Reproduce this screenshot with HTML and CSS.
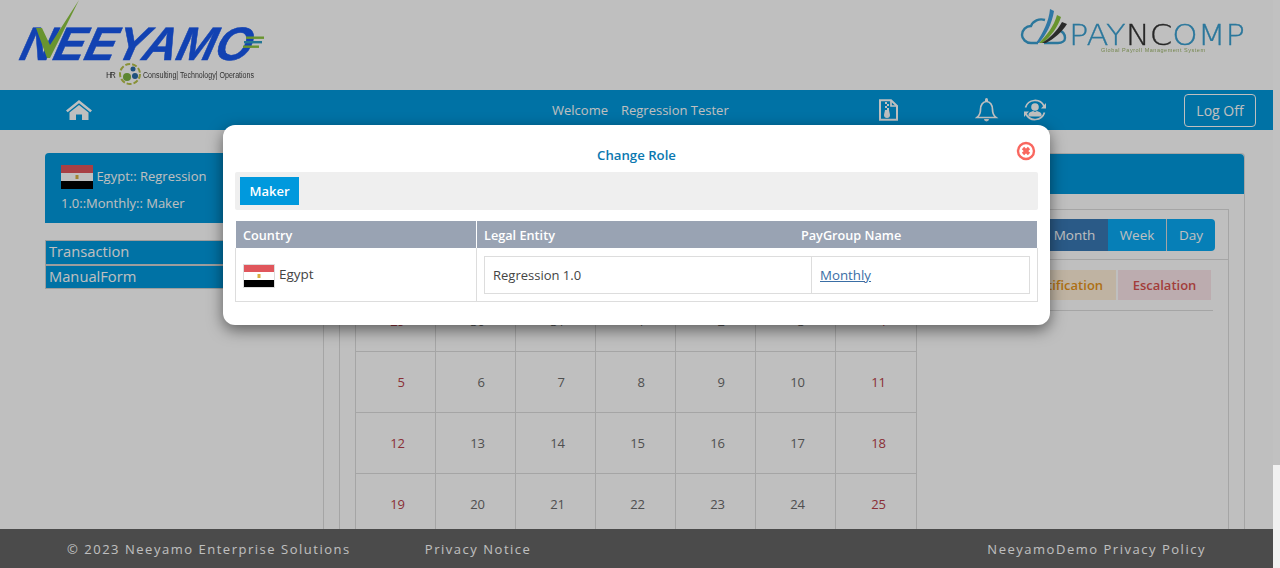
FILE: index.html
```html
<!DOCTYPE html>
<html lang="en">
<head>
<meta charset="utf-8">
<title>Neeyamo PayNComp</title>
<link rel="stylesheet" href="styles.css">
</head>
<body>
<div class="app">
  <div class="page">
    <header class="brand">
      <svg class="logo-neeyamo" width="270" height="90" viewBox="0 0 270 90">
        <text class="ny-word" transform="skewX(-14)" x="33" y="60" textLength="231" lengthAdjust="spacingAndGlyphs">NEEYAMO</text>
        <polygon class="ny-check" points="36,28 42,28 50,45 79,0 50,58 47,58"/>
        <g class="ny-lines">
          <rect x="246" y="36.500" width="18" height="2.400"/>
          <rect x="243" y="45.500" width="16" height="2.400"/>
        </g>
        <g class="ny-lines2">
          <rect x="244" y="41" width="18" height="2.400"/>
        </g>
        <text class="ny-sub" x="106" y="78" textLength="10">HR</text>
        <circle class="ny-globe-a" cx="130" cy="74" r="10"/>
        <circle class="ny-globe-b" cx="127" cy="77" r="4"/>
        <circle class="ny-globe-c" cx="135" cy="76" r="3"/>
        <circle class="ny-globe-d" cx="133" cy="69" r="2.500"/>
        <text class="ny-sub" x="143" y="78" textLength="111" lengthAdjust="spacingAndGlyphs">Consulting| Technology| Operations</text>
      </svg>
      <svg class="logo-paynd" width="240" height="60" viewBox="0 0 240 60">
        <path class="pc-cloud" d="M18 38H11C6 38 2 34 2 30C2 25 6 21 11 21C13 16 19 13 25 15M38 25C42 26 45 29 45 33C45 36 42 38 38 38H24"/>
        <path class="pc-blue" d="M30 4L34 6C32 19 26 30 19 38H16C23 28 29 16 30 4Z"/>
        <path class="pc-green" d="M37 10L41 12C38 22 31 31 23 38H19C27 30 34 21 37 10Z"/>
        <path class="pc-dark" d="M42 17L47 19C42 27 34 34 26 38H22C30 33 37 26 42 17Z"/>
        <text class="pc-word" x="49" y="40" textLength="176" lengthAdjust="spacingAndGlyphs">PAY<tspan class="pc-nc">NC</tspan>OMP</text>
        <text class="pc-sub" x="81" y="47" textLength="104">Global Payroll Management System</text>
      </svg>
    </header>

    <nav class="topbar">
      <svg class="icon-home" width="26" height="20" viewBox="0 0 26 20">
        <path d="M13 0L26 10.500L24.300 12.300L13 3.200L1.700 12.300L0 10.500Z"/>
        <path d="M13 5L22.500 12.600V20H16V14.500H10V20H3.500V12.600Z"/>
      </svg>
      <div class="welcome"><span>Welcome</span><span>Regression Tester</span></div>
      <svg class="icon-zip" width="20" height="22" viewBox="0 0 20 22">
        <path class="ln ln-bold" d="M1 1.200H12L18 7V20.800H1Z"/>
        <path class="ln" d="M12 1.200V7H18"/>
        <path class="fl" d="M6 3h2v2H6zM8 5h2v2H8zM6 7h2v2H6zM8 9h2v2H8z"/>
        <path class="fl" d="M6 11h4l1 5a3 3 0 1 1-6 0Z"/>
      </svg>
      <svg class="icon-bell" width="24" height="24" viewBox="0 0 24 24">
        <path class="ln" d="M2 19.500C4.500 17.500 5.500 15.500 5.500 11.500C5.500 7 8 3.500 11.500 3.500C15 3.500 17.500 7 17.500 11.500C17.500 15.500 18.500 17.500 21 19.500Z"/>
        <path class="fl" d="M10 1.500a1.500 1.500 0 0 1 3 0v2h-3Z"/>
        <path class="fl" d="M9 21h5a2.500 2.500 0 0 1-5 0Z"/>
      </svg>
      <svg class="icon-user" width="24" height="24" viewBox="0 0 24 24">
        <path class="ln" d="M2.500 9.500A10 10 0 0 1 21 8"/>
        <path class="ln" d="M21.500 14.500A10 10 0 0 1 3 16"/>
        <path class="fl" d="M23 5V10.500H18Z"/>
        <path class="fl" d="M1 19V13.500H6Z"/>
        <circle class="fl" cx="12" cy="9" r="3.800"/>
        <path class="fl" d="M5.500 18.500V16C6 14 9 13.500 10 13L12 14L14 13C15 13.500 18 14 18.500 16V18.500Z"/>
      </svg>
      <button class="logoff" type="button">Log Off</button>
    </nav>

    <main class="content">
      <aside class="sidebar">
        <div class="role-box">
          <svg class="flag" width="32" height="24" viewBox="0 0 32 24">
            <rect class="fr" width="32" height="8"/><rect class="fw" y="8" width="32" height="8"/><rect class="fb" y="16" width="32" height="8"/><rect class="fg" x="14.500" y="10" width="3" height="4"/>
          </svg>
          <span>Egypt:: Regression<br>1.0::Monthly:: Maker</span>
        </div>
        <ul class="menu">
          <li>Transaction</li>
          <li>ManualForm</li>
        </ul>
      </aside>

      <section class="panel">
        <div class="panel-head"></div>
        <div class="panel-body">
          <div class="inner">
            <div class="toolbar">
              <div class="btn-group">
                <button class="view active" type="button">Month</button>
                <button class="view" type="button">Week</button>
                <button class="view" type="button">Day</button>
              </div>
            </div>
            <div class="cal-wrap">
              <div class="calendar">
                <div class="dow"></div><div class="dow"></div><div class="dow"></div><div class="dow"></div><div class="dow"></div><div class="dow"></div><div class="dow"></div>
                <div class="day off">29</div><div class="day">30</div><div class="day">31</div><div class="day">1</div><div class="day">2</div><div class="day">3</div><div class="day off">4</div>
                <div class="day off">5</div><div class="day">6</div><div class="day">7</div><div class="day">8</div><div class="day">9</div><div class="day">10</div><div class="day off">11</div>
                <div class="day off">12</div><div class="day">13</div><div class="day">14</div><div class="day">15</div><div class="day">16</div><div class="day">17</div><div class="day off">18</div>
                <div class="day off">19</div><div class="day">20</div><div class="day">21</div><div class="day">22</div><div class="day">23</div><div class="day">24</div><div class="day off">25</div>
              </div>
              <div class="legend-col">
                <div class="legend">
                  <div class="tag notif">Notification</div>
                  <div class="tag esc">Escalation</div>
                </div>
              </div>
            </div>
          </div>
        </div>
      </section>
    </main>

    <footer class="footer">
      <span class="f-copy">© 2023 Neeyamo Enterprise Solutions</span>
      <span class="f-notice">Privacy Notice</span>
      <span class="f-policy">NeeyamoDemo Privacy Policy</span>
    </footer>

    <div class="overlay"></div>

    <div class="modal">
      <div class="modal-title">Change Role</div>
      <svg class="close" width="20" height="20" viewBox="0 0 20 20">
        <circle class="c-ring" cx="10" cy="10" r="8"/>
        <path class="c-x" d="M7 7L13 13M13 7L7 13"/>
      </svg>
      <div class="role-bar"><button class="role-btn" type="button">Maker</button></div>
      <div class="grid-head">
        <div class="gh-country">Country</div>
        <div class="gh-entity"><span>Legal Entity</span><span class="gh-pay">PayGroup Name</span></div>
      </div>
      <div class="grid-row">
        <div class="gr-country">
          <svg class="flag flag-light" width="32" height="24" viewBox="0 0 32 24">
            <rect class="fr" width="32" height="8"/><rect class="fw" y="8" width="32" height="8"/><rect class="fb" y="16" width="32" height="8"/><rect class="fg" x="14.500" y="10" width="3" height="4"/>
          </svg>
          <span>Egypt</span>
        </div>
        <div class="gr-entity">
          <div class="entity-row">
            <div class="er-name">Regression 1.0</div>
            <div class="er-pay"><a href="#">Monthly</a></div>
          </div>
        </div>
      </div>
    </div>
  </div>
  <div class="scrollbar"><div class="thumb"></div></div>
</div>
</body>
</html>
```
FILE: styles.css
```css
* { box-sizing: border-box; }
html, body { margin: 0; height: 100%; overflow: hidden; }
body { font-family: "Open Sans", "Noto Sans", sans-serif; font-size: 13px; color: #444; background: #fff; }
.app { display: flex; height: 568px; }
.page { position: relative; width: 1273px; height: 568px; display: flex; flex-direction: column; overflow: hidden; background: #fff; }
.scrollbar { width: 7px; height: 568px; background: #f1f1f1; }
.thumb { height: 465px; background: #c1c1c1; }

/* brand row */
.brand { height: 90px; flex: none; display: flex; justify-content: space-between; }
.logo-neeyamo { filter: blur(.4px); }
.logo-paynd { margin: 5px 13px 0 0; filter: blur(.3px); }
.ny-word { font-family: "Liberation Sans", sans-serif; font-weight: 700; font-style: italic; font-size: 47px; fill: #1858ee; stroke: #1858ee; stroke-width: .5px; }
.ny-check { fill: #8cc63f; }
.ny-lines rect { fill: #8cc63f; }
.ny-lines2 rect { fill: #2f9ec4; }
.ny-sub { font-family: "Liberation Sans", sans-serif; font-size: 8.500px; fill: #444; }
.ny-globe-a { fill: none; stroke: #b7c24a; stroke-width: 2; stroke-dasharray: 5 2; }
.ny-globe-b { fill: #7cb342; }
.ny-globe-c { fill: #2a6ca8; }
.ny-globe-d { fill: #2a6ca8; }
.pc-cloud { fill: none; stroke: #3a9fd0; stroke-width: 2.400; }
.pc-blue { fill: #3f9fdc; }
.pc-green { fill: #8cc63f; }
.pc-dark { fill: #3a3a3a; }
.pc-word { font-family: "DejaVu Sans", sans-serif; font-weight: 200; font-size: 29px; fill: #3a9fd0; stroke: #3a9fd0; stroke-width: .3px; }
.pc-nc { fill: #333; stroke: #333; }
.pc-sub { font-family: "Liberation Sans", sans-serif; font-size: 5.500px; fill: #9db56a; }

/* nav bar */
.topbar { height: 40px; flex: none; background: #0099dd; display: flex; align-items: center; padding-left: 66px; color: #fff; }
.icon-home { fill: #fff; flex: none; margin-top: -1px; }
.welcome { margin-left: 460px; width: 327px; display: flex; gap: 13px; font-size: 13px; }
.icon-zip, .icon-bell, .icon-user { flex: none; }
.ln { fill: none; stroke: #fff; stroke-width: 1.700; }
.ln-bold { stroke-width: 2; }
.fl { fill: #fff; }
.icon-bell { margin-left: 76px; }
.icon-user { margin-left: 24px; }
.logoff { margin-left: 137px; width: 72px; height: 33px; background: transparent; border: 1px solid #fff; border-radius: 4px; color: #fff; font: 14px "Open Sans", sans-serif; padding: 0; }

/* content */
.content { flex: 1; min-height: 0; overflow: hidden; display: flex; gap: 14px; padding: 23px 0 0 45px; }
.sidebar { width: 264px; flex: none; }
.role-box { background: #0099dd; color: #fff; height: 70px; border-radius: 4px 0 0 0; padding: 10px 16px 0; font-size: 13px; line-height: 27px; }
.role-box .flag { vertical-align: middle; margin-top: -2px; }
.menu { list-style: none; margin: 17px 0 0; padding: 0; }
.menu li { height: 24.500px; background: #0099dd; color: #fff; border: 1px solid #d2d2d2; padding-left: 3px; font-size: 14.700px; line-height: 21px; }
.panel { width: 922px; flex: none; border: 1px solid #ddd; border-radius: 4px 4px 0 0; border-bottom: 0; }
.panel-head { height: 40px; background: #0099dd; border-radius: 4px 4px 0 0; }
.panel-body { padding: 15px 15px 0; }
.inner { border: 1px solid #ddd; border-bottom: 0; height: 400px; }
.toolbar { height: 50px; padding: 9px 13px 0; display: flex; justify-content: flex-end; border-bottom: 1px solid #ddd; }
.btn-group { display: flex; height: 32px; }
.view { height: 32px; border: 0; background: #08aaf5; color: #fff; font: 13.500px "Open Sans", sans-serif; padding: 0; width: 59px; border-right: 1px solid #ddd; }
.view.active { background: #3878b5; width: 67px; border-right: 0; border-radius: 4px 0 0 4px; }
.view:last-child { width: 48px; border-right: 0; border-radius: 0 4px 4px 0; }
.cal-wrap { display: flex; padding-left: 15px; }
.calendar { width: 562px; flex: none; display: grid; grid-template-columns: repeat(7, 1fr); grid-auto-rows: 61px; grid-template-rows: 31px; border-left: 1px solid #ddd; border-right: 1px solid #ddd; }
.dow { border-bottom: 1px solid #ddd; }
.day { border-bottom: 1px solid #ddd; border-right: 1px solid #ddd; text-align: right; padding: 20px 30px 0 0; font-size: 13px; line-height: 20px; color: #6a6a6a; }
.day:nth-child(7n) { border-right: 0; }
.day.off { color: #b84048; }
.legend-col { flex: 1; padding: 10px 15px 0 14px; }
.legend { display: flex; justify-content: flex-end; gap: 2px; height: 41px; padding-right: 2px; border-bottom: 1px solid #ddd; }
.tag { height: 30px; font-size: 13px; font-weight: 600; line-height: 30px; text-align: center; }
.notif { width: 100px; background: #ffefd9; color: #e8951a; }
.esc { width: 93px; background: #fbe6ea; color: #d9534f; }

/* footer */
.footer { height: 39px; flex: none; background: #646464; color: #fff; display: flex; align-items: center; padding-left: 67px; font-size: 13px; letter-spacing: 1.520px; }
.f-notice { margin-left: 74px; }
.f-policy { margin-left: auto; margin-right: 67px; }

/* modal */
.overlay { position: absolute; inset: 0; background: rgba(0, 0, 0, .25); }
.modal { position: absolute; left: 223px; top: 125px; width: 827px; height: 200px; background: #fff; border-radius: 12px; box-shadow: 0 5px 15px rgba(0, 0, 0, .5); padding: 47px 12px 0; }
.modal-title { position: absolute; left: 0; right: 0; top: 21px; text-align: center; color: #0a78b0; font-size: 13.200px; font-weight: 600; line-height: 18px; }
.close { position: absolute; right: 14px; top: 16px; }
.c-ring { fill: none; stroke: #f9675f; stroke-width: 2.400; }
.c-x { stroke: #f9675f; stroke-width: 3.200; fill: none; }
.role-bar { height: 38px; background: #efefef; border-radius: 2px; padding: 5px; }
.role-btn { width: 59px; height: 28px; border: 0; background: #0099dd; color: #fff; font: 600 13px "Open Sans", sans-serif; padding: 0; }
.grid-head { display: flex; height: 27px; margin: 11px 1px 0; background: #99a3b3; color: #fff; font-size: 12.700px; font-weight: 600; line-height: 28px; }
.gh-country { width: 241px; padding-left: 7px; border-right: 1px solid #fff; }
.gh-entity { flex: 1; padding-left: 7px; display: flex; }
.gh-pay { margin-left: 246px; }
.grid-row { display: flex; height: 54px; border: 1px solid #ddd; border-top: 0; }
.gr-country { width: 241px; border-right: 1px solid #ddd; display: flex; align-items: center; gap: 4px; padding: 0 0 2px 7px; font-size: 13.500px; color: #444; }
.gr-country .flag { margin-top: 4px; }
.gr-entity { flex: 1; padding: 8px 7px 7px; }
.entity-row { display: flex; height: 38px; border: 1px solid #ddd; font-size: 13px; line-height: 37px; color: #444; }
.er-name { width: 327px; padding-left: 8px; border-right: 1px solid #ddd; }
.er-pay { flex: 1; padding-left: 8px; font-size: 13.300px; }
.er-pay a { color: #3a6ea5; }

/* flag */
.flag { flex: none; }
.fr { fill: #e0565c; }
.fw { fill: #fff; }
.fb { fill: #000; }
.fg { fill: #d8b040; }
.flag-light { outline: 1px solid #ddd; outline-offset: -1px; }
```
